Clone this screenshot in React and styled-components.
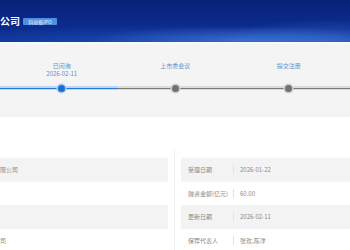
import React from "react";
import styled, { createGlobalStyle } from "styled-components";

const GlobalStyle = createGlobalStyle`
  html, body {
    margin: 0;
    padding: 0;
    background: #ffffff;
    overflow: hidden;
  }
  body {
    font-family: "Noto Sans CJK SC", "Noto Sans", sans-serif;
  }
`;

const steps = [
  { label: "已问询", date: "2026-02-11", active: true },
  { label: "上市委会议" },
  { label: "提交注册" },
];

const rows = [
  { left: "限公司", label: "受理日期", value: "2026-01-22" },
  { left: "", label: "融资金额(亿元)", value: "60.00" },
  { left: "", label: "更新日期", value: "2026-02-11" },
  { left: "司", label: "保荐代表人", value: "张欢,陈津" },
];

function App() {
  return (
    <Page>
      <GlobalStyle />
      <Header>
        <Title>公司</Title>
        <Badge>科创板IPO</Badge>
      </Header>
      <Progress>
        <StepRow>
          {steps.map((s) => (
            <Step key={s.label}>
              <StepLabel>{s.label}</StepLabel>
              <StepDate>{s.date || ""}</StepDate>
            </Step>
          ))}
        </StepRow>
        <DotRow>
          {steps.map((s) => (
            <DotCell key={s.label}>
              <Dot active={s.active} />
            </DotCell>
          ))}
        </DotRow>
      </Progress>
      <Body>
        <Table>
          <Column>
            {rows.map((r, i) => (
              <LeftCell key={i} striped={i % 2 === 0}>
                {r.left}
              </LeftCell>
            ))}
          </Column>
          <Separator />
          <Column>
            {rows.map((r, i) => (
              <InfoRow key={r.label} striped={i % 2 === 0}>
                <InfoLabel>{r.label}</InfoLabel>
                <InfoValue>{r.value}</InfoValue>
              </InfoRow>
            ))}
          </Column>
        </Table>
      </Body>
    </Page>
  );
}

export default App;

const Page = styled.div`
  width: 350px;
  height: 250px;
  overflow: hidden;
  background: #fff;
`;

const Header = styled.div`
  height: 44px;
  display: flex;
  align-items: center;
  gap: 3px;
  padding-bottom: 2px;
  box-sizing: border-box;
  border-bottom: 2px solid #f7f9fc;
  background:
    radial-gradient(ellipse 150px 14px at 240px 40px, rgba(90, 150, 240, 0.45), rgba(90, 150, 240, 0) 100%),
    radial-gradient(ellipse 120px 30px at 330px 48px, rgba(70, 130, 230, 0.55), rgba(70, 130, 230, 0) 100%),
    radial-gradient(ellipse 260px 22px at 170px 46px, rgba(40, 100, 210, 0.5), rgba(40, 100, 210, 0) 100%),
    linear-gradient(180deg, #082279 0%, #0b2a8a 60%, #0e3396 100%);
`;

const Title = styled.span`
  color: #ffffff;
  font-size: 10px;
  font-weight: 700;
  line-height: 12px;
  margin-top: 2px;
`;

const Badge = styled.span`
  background: #4f8fe0;
  color: #e8f2ff;
  font-size: 5px;
  line-height: 7px;
  padding: 0 4px;
  border-radius: 1px;
  margin-top: 3px;
  width: 26px;
  white-space: nowrap;
  text-align: center;
`;

const Progress = styled.div`
  background: #f4f4f4;
  height: 73px;
  box-sizing: border-box;
  padding-top: 18px;
`;

const StepRow = styled.div`
  display: flex;
  padding-left: 5px;
`;

const Step = styled.div`
  width: 113.5px;
  flex: none;
  display: flex;
  flex-direction: column;
  align-items: center;
  height: 20px;
`;

const StepLabel = styled.div`
  color: #5b93d3;
  font-size: 6px;
  line-height: 8px;
  white-space: nowrap;
`;

const StepDate = styled(StepLabel)``;

const DotRow = styled.div`
  display: flex;
  padding-left: 5px;
  height: 12px;
  background-image:
    linear-gradient(to right, #2a7ad8 118px, #7a7a7a 118px),
    linear-gradient(to right, #bcd8f4 118px, #dcdcdc 118px);
  background-size: 100% 1px, 100% 4px;
  background-position: 0 center, 0 center;
  background-repeat: no-repeat;
`;

const DotCell = styled.div`
  width: 113.5px;
  flex: none;
  display: flex;
  justify-content: center;
  align-items: center;
`;

const Dot = styled.div`
  width: 7px;
  height: 7px;
  border-radius: 50%;
  background: ${(p) => (p.active ? "#1a6fd6" : "#727272")};
  box-shadow: 0 0 0 1.5px ${(p) => (p.active ? "#a9cdf3" : "#cfcfcf")};
`;

const Body = styled.div`
  padding-top: 33px;
`;

const Table = styled.div`
  display: grid;
  grid-template-columns: 168px 1px 1fr;
  column-gap: 6px;
`;

const Column = styled.div`
  display: flex;
  flex-direction: column;
  padding-top: 8px;
`;

const Separator = styled.div`
  background: #efefef;
`;

const LeftCell = styled.div`
  height: 23.5px;
  display: flex;
  align-items: center;
  background: ${(p) => (p.striped ? "#f3f3f3" : "transparent")};
  color: #8a8a8a;
  font-size: 6px;
`;

const InfoRow = styled.div`
  height: 23.5px;
  display: flex;
  align-items: center;
  background: ${(p) => (p.striped ? "#f3f3f3" : "transparent")};
  color: #8a8a8a;
  font-size: 6px;
  white-space: nowrap;
`;

const InfoLabel = styled.div`
  width: 45px;
  padding-left: 7px;
  border-right: 1px solid #e2e2e2;
  line-height: 9px;
`;

const InfoValue = styled.div`
  padding-left: 6px;
  line-height: 9px;
`;
